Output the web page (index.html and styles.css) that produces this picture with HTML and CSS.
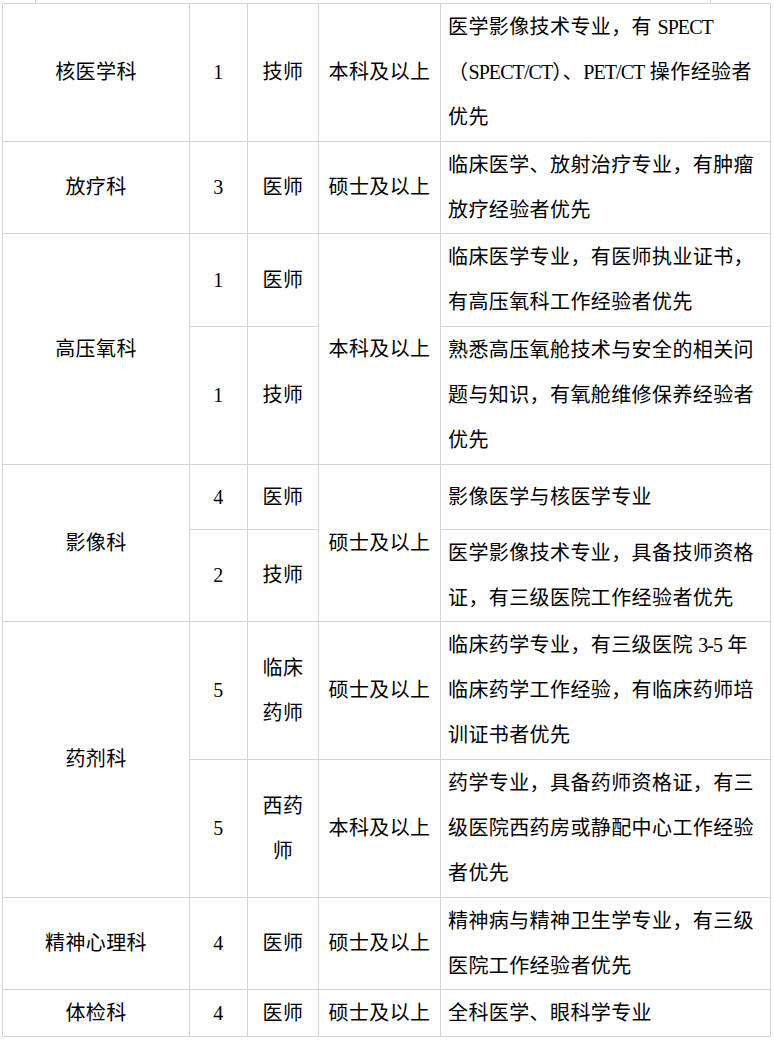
FILE: index.html
```html
<!DOCTYPE html>
<html lang="zh-CN">
<head>
<meta charset="utf-8">
<title>招聘岗位</title>
<link rel="stylesheet" href="styles.css">
</head>
<body>
<div class="prev-row"></div>
<div class="grid">
  <div class="cell">核医学科</div>
  <div class="cell num">1</div>
  <div class="cell">技师</div>
  <div class="cell">本科及以上</div>
  <div class="cell desc"><div class="lines">医学影像技术专业，有 <span class="lat">SPECT</span><br>（<span class="lat">SPECT/CT</span>）、<span class="lat">PET/CT</span> 操作经验者<br>优先</div></div>

  <div class="cell">放疗科</div>
  <div class="cell num">3</div>
  <div class="cell">医师</div>
  <div class="cell">硕士及以上</div>
  <div class="cell desc"><div class="lines">临床医学、放射治疗专业，有肿瘤<br>放疗经验者优先</div></div>

  <div class="cell span2">高压氧科</div>
  <div class="cell num">1</div>
  <div class="cell">医师</div>
  <div class="cell span2">本科及以上</div>
  <div class="cell desc"><div class="lines">临床医学专业，有医师执业证书，<br>有高压氧科工作经验者优先</div></div>
  <div class="cell num">1</div>
  <div class="cell">技师</div>
  <div class="cell desc"><div class="lines">熟悉高压氧舱技术与安全的相关问<br>题与知识，有氧舱维修保养经验者<br>优先</div></div>

  <div class="cell span2">影像科</div>
  <div class="cell num">4</div>
  <div class="cell">医师</div>
  <div class="cell span2">硕士及以上</div>
  <div class="cell desc"><div class="lines">影像医学与核医学专业</div></div>
  <div class="cell num">2</div>
  <div class="cell">技师</div>
  <div class="cell desc"><div class="lines">医学影像技术专业，具备技师资格<br>证，有三级医院工作经验者优先</div></div>

  <div class="cell span2">药剂科</div>
  <div class="cell num">5</div>
  <div class="cell"><div class="lines">临床<br>药师</div></div>
  <div class="cell">硕士及以上</div>
  <div class="cell desc"><div class="lines">临床药学专业，有三级医院 <span class="lat">3-5</span> 年<br>临床药学工作经验，有临床药师培<br>训证书者优先</div></div>
  <div class="cell num">5</div>
  <div class="cell"><div class="lines">西药<br>师</div></div>
  <div class="cell">本科及以上</div>
  <div class="cell desc"><div class="lines">药学专业，具备药师资格证，有三<br>级医院西药房或静配中心工作经验<br>者优先</div></div>

  <div class="cell">精神心理科</div>
  <div class="cell num">4</div>
  <div class="cell">医师</div>
  <div class="cell">硕士及以上</div>
  <div class="cell desc"><div class="lines">精神病与精神卫生学专业，有三级<br>医院工作经验者优先</div></div>

  <div class="cell">体检科</div>
  <div class="cell num">4</div>
  <div class="cell">医师</div>
  <div class="cell">硕士及以上</div>
  <div class="cell desc"><div class="lines">全科医学、眼科学专业</div></div>
</div>
</body>
</html>
```
FILE: styles.css
```css
html, body {
  margin: 0;
  padding: 0;
  background: #ffffff;
}

body {
  font-family: "Liberation Serif", "Noto Sans CJK SC", serif;
  color: #000000;
  font-size: 20px;
  letter-spacing: 0.4px;
  line-height: 45px;
}

.prev-row {
  margin-left: 35px;
  width: 674px;
  height: 3px;
  border-left: 1px solid #d4d4d4;
  border-right: 1px solid #d4d4d4;
}

.grid {
  margin-left: 2px;
  width: 767px;
  display: grid;
  grid-template-columns: 186px 57px 70px 121px 329px;
  grid-template-rows: 137px 91px 92px 137px 64px 91px 137px 137px 91px 46px;
  gap: 1px;
  padding: 1px;
  background: #d4d4d4;
}

.cell {
  background: #ffffff;
  display: flex;
  align-items: center;
  justify-content: center;
  text-align: center;
  white-space: nowrap;
}

.span2 {
  grid-row: span 2;
}

.desc {
  justify-content: flex-start;
  text-align: left;
  padding-left: 7px;
}

.lat {
  letter-spacing: -0.9px;
}
```
